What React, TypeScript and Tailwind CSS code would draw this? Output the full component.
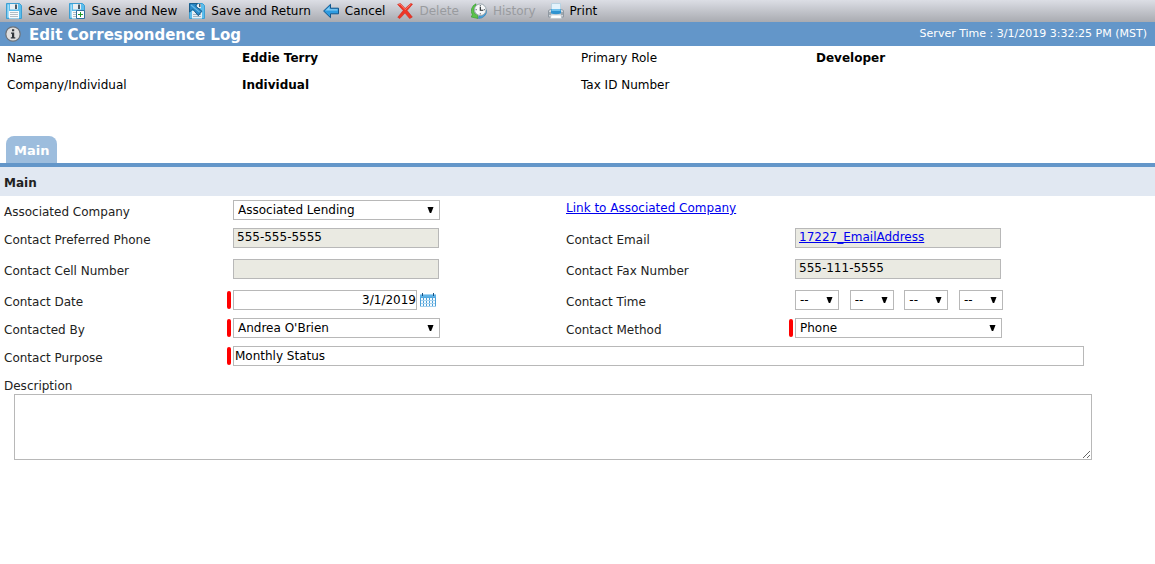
import { useState } from 'react';
import type { ReactNode } from 'react';
import clsx from 'clsx';

/* ---------- icons ---------- */

function FloppyBase() {
	return (
		<>
			<path d="M.5.5h13l2 2v13H.5z" fill="#5cbdec" stroke="#3d9fd3" />
			<path d="M1.5 1.5h1.5v13H1.5z" fill="#a5dcf6" />
			<path d="M4 1h8v5.5H4z" fill="#e9eef2" />
			<path d="M9 1.5h2V6H9z" fill="#4a5965" />
			<path d="M3 8h10v7.5H3z" fill="#fafbfc" />
			<path d="M4 9.5h8M4 11.5h8M4 13.5h8" stroke="#b4bdc4" />
		</>
	);
}

function SaveIcon() {
	return (
		<svg viewBox="0 0 16 16" className="size-4 shrink-0" aria-hidden="true">
			<FloppyBase />
		</svg>
	);
}

function SaveNewIcon() {
	return (
		<svg viewBox="0 0 16 16" className="size-4 shrink-0" aria-hidden="true">
			<FloppyBase />
			<path d="M7.5 7.5h8v8h-8z" fill="#fff" stroke="#2f6f9f" />
			<path d="M11.5 9v5M9 11.5h5" stroke="#1f9a2c" />
		</svg>
	);
}

function SaveReturnIcon() {
	return (
		<svg viewBox="0 0 16 16" className="size-4 shrink-0" aria-hidden="true">
			<path d="M.5.5h13l2 2v13H.5z" fill="#5cbdec" stroke="#3d9fd3" />
			<path d="M8 1h4v4H8z" fill="#e9eef2" />
			<path d="M10 1h1.5v3H10z" fill="#4a5965" />
			<path d="M3 8h10v7.5H3z" fill="#e6f0f6" />
			<path d="M4 11.5h8M4 13.5h8" stroke="#9fb4c2" />
			<path
				d="M.6.6h8L6.5 3l6.4 5.2-3.6 4.5-5.6-6.6L.6 9z"
				fill="#2a8ccb"
				stroke="#14507c"
				strokeWidth=".9"
				strokeLinejoin="round"
			/>
			<path d="m2 2 8.6 7.2" stroke="#6dbbe8" strokeWidth="1.1" />
		</svg>
	);
}

function CancelIcon() {
	return (
		<svg viewBox="0 0 16 16" className="size-4 shrink-0" aria-hidden="true">
			<path d="M.6 8 7.5 1.3v3.9h8v5.6h-8v3.9z" fill="#2d9be0" stroke="#12568c" strokeLinejoin="round" />
			<path d="M2.4 7.5 6.6 3.4v2.8h7.9v1.3z" fill="#85cdf5" />
		</svg>
	);
}

function DeleteIcon() {
	return (
		<svg viewBox="0 0 16 16" className="size-4 shrink-0" aria-hidden="true">
			<path
				d="M.6 1.4 3.4.5l4.8 5L13.8.4l1.7.8-5.4 6.3 5.2 6.6-2.7 1.4L8 10.1l-5.2 5.4-2-1.2 5.4-6.8z"
				fill="#ee3526"
				stroke="#cf2a1e"
				strokeWidth=".6"
				strokeLinejoin="round"
			/>
			<path d="M1.8 1.7 3.3 1.2l4.9 5.4 5.4-5" fill="none" stroke="#ff8b7c" strokeWidth=".8" />
		</svg>
	);
}

function HistoryIcon() {
	return (
		<svg viewBox="0 0 16 16" className="size-4 shrink-0" aria-hidden="true">
			<path
				d="M5 .8a7.6 7.6 0 0 0-3.6 10.9L.2 14l6.8 1.5-1-6-1.7 1.6A5 5 0 0 1 5 3.5z"
				fill="#5cc24a"
				stroke="#2e9a2b"
				strokeWidth=".6"
			/>
			<path d="M7.6 15.4a7.8 7.8 0 0 0 8-8.4l-2 1.2A5.5 5.5 0 0 1 8 13z" fill="#4ba4dd" stroke="#2a78b0" strokeWidth=".6" />
			<circle cx="9.3" cy="6.7" r="5.8" fill="#f6f8f9" stroke="#98a5ad" />
			<path d="M9.3 2v1.2M9.3 10.2v1.2M4.6 6.7h1.2M12.8 6.7H14" stroke="#565f66" />
			<path d="M9.3 3.8v3.4h3" fill="none" stroke="#22272b" strokeWidth="1.1" />
		</svg>
	);
}

function PrintIcon() {
	return (
		<svg viewBox="0 0 16 16" className="size-4 shrink-0" aria-hidden="true">
			<path d="M3.5.5h9v7h-9z" fill="#e3f3fc" stroke="#b9d3e2" />
			<path d="M.5 7.5 2.5 6.5h11l2 1v6.5H.5z" fill="#d3d8dd" stroke="#9099a2" />
			<path d="M3 6h10v4.5q-5 1.5-10 0z" fill="#2f93d0" />
			<path d="M3.5 6h9v2h-9z" fill="#6fc0ec" />
			<path d="M3 12h10l.6 3.4H2.4z" fill="#fff" stroke="#b4bcc2" strokeWidth=".6" />
			<path d="M1.5 9h1v3h-1zM13.5 9h1v3h-1z" fill="#6d7680" />
		</svg>
	);
}

function InfoIcon() {
	return (
		<svg viewBox="0 0 16 16" className="size-4 shrink-0" aria-hidden="true">
			<circle cx="8" cy="8" r="7.2" fill="#dedede" stroke="#6b7178" strokeWidth="1.2" />
			<path d="M7 3.2h2.2v2H7zM6 6.5h3.2v4.8h1.1v1.3H5.8v-1.3H7V7.7H6z" fill="#30353a" />
		</svg>
	);
}

function CalendarIcon() {
	return (
		<svg viewBox="0 0 16 16" className="size-4 shrink-0" aria-hidden="true">
			<path d="M0 2h16v12.5H0z" fill="#4a9fd8" />
			<path d="M0 2h16v3.5H0z" fill="#5fb2e6" />
			<path d="M0 2h16v1H0z" fill="#a3d5f3" />
			<path d="M2 1h1v3H2zM13 1h1v3h-1z" fill="#174f80" />
			<path
				d="M1 6h2v8H1zM4 6h2v8H4zM7 6h2v8H7zM10 6h2v8h-2zM13 6h2v8h-2z"
				fill="#f4fafe"
			/>
			<path d="M1 8.5h14M1 11.5h14" stroke="#a9d3ee" />
		</svg>
	);
}

/* ---------- form pieces ---------- */

interface ToolButtonProps {
	icon: ReactNode;
	label: string;
	disabled?: boolean;
}

function ToolButton({ icon, label, disabled }: ToolButtonProps) {
	return (
		<button
			type="button"
			disabled={disabled}
			className="flex items-center gap-1.5 whitespace-nowrap text-black disabled:text-[#999b9f]"
		>
			{icon}
			{label}
		</button>
	);
}

function Label({ htmlFor, children }: { htmlFor: string; children: ReactNode }) {
	return (
		<label htmlFor={htmlFor} className="pt-2 pl-1 leading-4 text-[#222]">
			{children}
		</label>
	);
}

// The 6px gutter holds the red bar on required fields and stays empty otherwise.
function Field({ required, className, children }: { required?: boolean; className?: string; children: ReactNode }) {
	return (
		<div className={clsx('flex min-w-0 items-start pt-1', className)}>
			<span className={clsx('mt-px mr-0.5 h-[18px] w-1 shrink-0 rounded-xs', required && 'bg-[#ff0000]')} />
			{children}
		</div>
	);
}

interface SelectBoxProps {
	id?: string;
	ariaLabel?: string;
	options: string[];
	className: string;
}

function SelectBox({ id, ariaLabel, options, className }: SelectBoxProps) {
	return (
		<span className={clsx('relative block h-5', className)}>
			<select
				id={id}
				aria-label={ariaLabel}
				className="block h-5 w-full appearance-none border border-[#b8b8b8] bg-white pl-1 leading-4 text-black"
			>
				{options.map((o) => (
					<option key={o}>{o}</option>
				))}
			</select>
			<svg viewBox="0 0 7 6" className="pointer-events-none absolute top-[7px] right-1.5 h-1.5 w-[7px]" aria-hidden="true">
				<path d="M.5 0h6L4.2 6H2.8z" fill="#000" />
			</svg>
		</span>
	);
}

const readOnlyBox = 'block h-5 w-[206px] border border-[#b8b8b8] bg-[#eaeae2] pl-[3px] pb-0.5 leading-4 text-black';
const editBox = 'block h-5 border border-[#b8b8b8] bg-white leading-4 text-black';
const formGrid = 'grid grid-cols-[227fr_335fr_227fr_366fr]';

export default function App() {
	const [date, setDate] = useState('3/1/2019');
	const [purpose, setPurpose] = useState('Monthly Status');
	const [description, setDescription] = useState('');

	return (
		<div className="min-h-screen bg-white font-['DejaVu_Sans',Verdana,sans-serif] text-xs text-black">
			<nav className="flex h-[22px] items-center gap-3 bg-linear-to-b from-[#dcdee5] to-[#a9abb1] pl-1.5">
				<ToolButton icon={<SaveIcon />} label="Save" />
				<ToolButton icon={<SaveNewIcon />} label="Save and New" />
				<ToolButton icon={<SaveReturnIcon />} label="Save and Return" />
				<ToolButton icon={<CancelIcon />} label="Cancel" />
				<ToolButton icon={<DeleteIcon />} label="Delete" disabled />
				<ToolButton icon={<HistoryIcon />} label="History" disabled />
				<ToolButton icon={<PrintIcon />} label="Print" />
			</nav>

			<header className="flex h-6 items-center bg-[#6396c9] pr-2 pl-[5px] text-white">
				<InfoIcon />
				<h1 className="ml-2 pt-0.5 text-[15px] leading-5 font-bold">Edit Correspondence Log</h1>
				<span className="ml-auto text-[11px]">Server Time : 3/1/2019 3:32:25 PM (MST)</span>
			</header>

			<dl className="grid h-[90px] grid-cols-[235fr_339fr_235fr_339fr] content-start gap-y-[11px] pt-1 pl-[7px] leading-4">
				<dt>Name</dt>
				<dd className="font-bold">Eddie Terry</dd>
				<dt>Primary Role</dt>
				<dd className="font-bold">Developer</dd>
				<dt>Company/Individual</dt>
				<dd className="font-bold">Individual</dd>
				<dt>Tax ID Number</dt>
				<dd />
			</dl>

			<div className="flex border-b-4 border-[#6396c9] pl-1.5">
				<button type="button" className="h-[27px] rounded-t-lg bg-[#9dbddd] px-2 pt-0.5 text-[13px] font-bold text-white">
					Main
				</button>
			</div>

			<form>
				<h2 className="h-[29px] bg-[#e1e8f2] pt-2 pl-1 leading-4 font-bold text-[#222]">Main</h2>

				<div className={clsx(formGrid, 'h-7')}>
					<Label htmlFor="company">Associated Company</Label>
					<Field>
						<SelectBox id="company" className="w-[207px]" options={['Associated Lending']} />
					</Field>
					<a href="#company" className="pt-1 pl-1 leading-4 whitespace-nowrap text-[#0000ee] underline">
						Link to Associated Company
					</a>
				</div>

				<div className={clsx(formGrid, 'h-[31px]')}>
					<Label htmlFor="phone">Contact Preferred Phone</Label>
					<Field>
						<input id="phone" readOnly value="555-555-5555" className={readOnlyBox} />
					</Field>
					<span className="pt-2 pl-1 leading-4 text-[#222]">Contact Email</span>
					<Field>
						<div className={readOnlyBox}>
							<a href="mailto:17227_EmailAddress" className="text-[#0000ee] underline">
								17227_EmailAddress
							</a>
						</div>
					</Field>
				</div>

				<div className={clsx(formGrid, 'h-[31px]')}>
					<Label htmlFor="cell">Contact Cell Number</Label>
					<Field>
						<input id="cell" readOnly value="" className={readOnlyBox} />
					</Field>
					<Label htmlFor="fax">Contact Fax Number</Label>
					<Field>
						<input id="fax" readOnly value="555-111-5555" className={readOnlyBox} />
					</Field>
				</div>

				<div className={clsx(formGrid, 'h-7')}>
					<Label htmlFor="date">Contact Date</Label>
					<Field required>
						<input
							id="date"
							value={date}
							onChange={(e) => setDate(e.target.value)}
							className={clsx(editBox, 'w-[184px] text-right')}
						/>
						<button type="button" aria-label="Pick a date" className="mt-0.5 ml-[3px]">
							<CalendarIcon />
						</button>
					</Field>
					<Label htmlFor="hour">Contact Time</Label>
					<Field>
						<div className="flex w-52 justify-between">
							<SelectBox id="hour" className="w-11" options={['--']} />
							<SelectBox ariaLabel="Minute" className="w-11" options={['--']} />
							<SelectBox ariaLabel="AM or PM" className="w-11" options={['--']} />
							<SelectBox ariaLabel="Time zone" className="w-11" options={['--']} />
						</div>
					</Field>
				</div>

				<div className={clsx(formGrid, 'h-7')}>
					<Label htmlFor="by">Contacted By</Label>
					<Field required>
						<SelectBox id="by" className="w-[207px]" options={["Andrea O'Brien"]} />
					</Field>
					<Label htmlFor="method">Contact Method</Label>
					<Field required>
						<SelectBox id="method" className="w-[207px]" options={['Phone']} />
					</Field>
				</div>

				<div className={clsx(formGrid, 'h-7')}>
					<Label htmlFor="purpose">Contact Purpose</Label>
					<Field required className="col-span-3 pr-[71px]">
						<input
							id="purpose"
							value={purpose}
							onChange={(e) => setPurpose(e.target.value)}
							className={clsx(editBox, 'w-full pl-px')}
						/>
					</Field>
				</div>

				<div className="flex flex-col">
					<Label htmlFor="description">Description</Label>
					<textarea
						id="description"
						value={description}
						onChange={(e) => setDescription(e.target.value)}
						className="mr-[63px] ml-3.5 h-[66px] resize border border-[#b8b8b8] bg-white p-0.5"
					/>
				</div>
			</form>
		</div>
	);
}
